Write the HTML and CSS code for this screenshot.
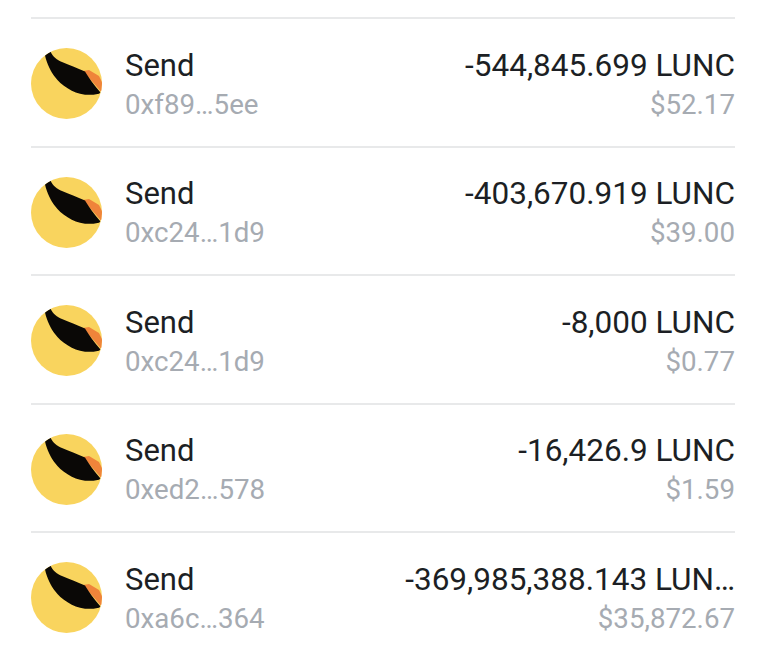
FILE: index.html
```html
<!DOCTYPE html>
<html lang="en">
<head>
<meta charset="utf-8">
<title>Transactions</title>
<link rel="stylesheet" href="styles.css">
</head>
<body>
<svg class="defs" width="0" height="0" aria-hidden="true">
  <defs>
    <clipPath id="disc"><circle cx="35.5" cy="35.5" r="35.5"/></clipPath>
    <symbol id="lunc" viewBox="0 0 71 71">
      <circle cx="35.5" cy="35.5" r="35.5" fill="#f9d45e"/>
      <g clip-path="url(#disc)">
        <path d="M52 23 L58 22 L68 28 L72 36 L72 46 Z" fill="#ef843a"/>
        <path d="M14 7.5 L19.5 3.5 C22 9 26 12 31 14 C38 17 46 20 54 23.5 C58 30 63 37 69.5 44.5 L68 45.7 C62 47 58 47 54 46.7 C47 46 42 43.5 37 40.5 C31 37 27 33 24 29 C20 24 16 16 14 7.5 Z" fill="#0a0806"/>
      </g>
    </symbol>
  </defs>
</svg>
<main class="list">
  <section class="row">
    <svg class="icon"><use href="#lunc"/></svg>
    <div class="who"><div class="title name">Send</div><div class="sub">0xf89…5ee</div></div>
    <div class="amount"><div class="title">-544,845.699 LUNC</div><div class="sub">$52.17</div></div>
  </section>
  <section class="row">
    <svg class="icon"><use href="#lunc"/></svg>
    <div class="who"><div class="title name">Send</div><div class="sub">0xc24…1d9</div></div>
    <div class="amount"><div class="title">-403,670.919 LUNC</div><div class="sub">$39.00</div></div>
  </section>
  <section class="row">
    <svg class="icon"><use href="#lunc"/></svg>
    <div class="who"><div class="title name">Send</div><div class="sub">0xc24…1d9</div></div>
    <div class="amount"><div class="title">-8,000 LUNC</div><div class="sub">$0.77</div></div>
  </section>
  <section class="row">
    <svg class="icon"><use href="#lunc"/></svg>
    <div class="who"><div class="title name">Send</div><div class="sub">0xed2…578</div></div>
    <div class="amount"><div class="title">-16,426.9 LUNC</div><div class="sub">$1.59</div></div>
  </section>
  <section class="row">
    <svg class="icon"><use href="#lunc"/></svg>
    <div class="who"><div class="title name">Send</div><div class="sub">0xa6c…364</div></div>
    <div class="amount"><div class="title">-369,985,388.143 LUN…</div><div class="sub">$35,872.67</div></div>
  </section>
</main>
</body>
</html>
```

FILE: styles.css
```css
html, body {
  margin: 0;
  background: #ffffff;
}
body {
  height: 657px;
  overflow: hidden;
  font-family: Roboto, "Liberation Sans", sans-serif;
}
.defs {
  position: absolute;
}
.list {
  margin: 17px 31px 0;
  width: 704px;
}
.row {
  height: 128.5px;
  box-sizing: border-box;
  border-top: 2px solid #e8e9ea;
  display: flex;
  align-items: center;
  padding-top: 3px;
}
.icon {
  width: 71px;
  height: 71px;
  flex: none;
  margin-right: 23px;
}
.who {
  flex: none;
  padding-top: 2px;
}
.amount {
  flex: 1;
  text-align: right;
  min-width: 0;
  padding-top: 2px;
}
.title {
  font-size: 31.5px;
  line-height: 39px;
  color: #1c1f24;
  white-space: nowrap;
}
.name {
  font-size: 31px;
}
.sub {
  font-size: 27.7px;
  line-height: 39px;
  color: #a6abb2;
  white-space: nowrap;
}
```
